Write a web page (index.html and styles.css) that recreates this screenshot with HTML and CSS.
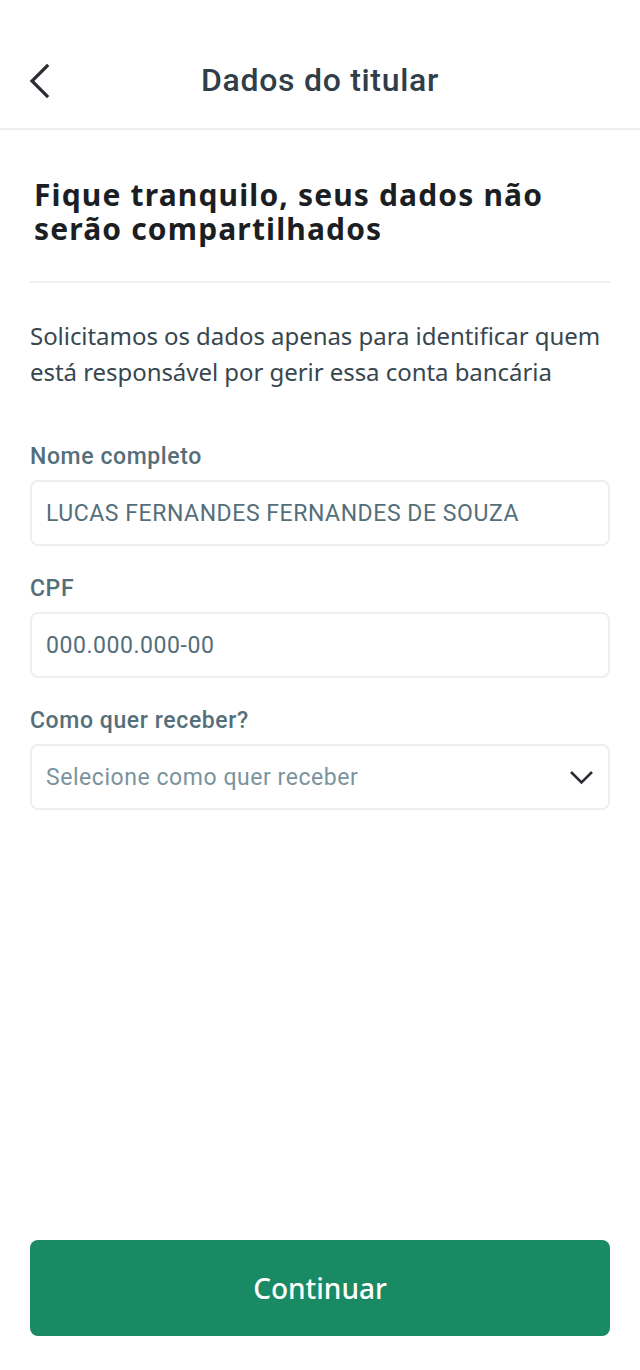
FILE: index.html
```html
<!DOCTYPE html>
<html lang="pt-BR">
<head>
<meta charset="utf-8">
<title>Dados do titular</title>
<link rel="stylesheet" href="styles.css">
</head>
<body>
<div class="screen">
  <header class="topbar">
    <button class="back" aria-label="Voltar">
      <svg width="24" height="34" viewBox="0 0 24 34"><path d="M20 2 L5 17 L20 32" fill="none" stroke="#2b2f33" stroke-width="3.2" stroke-linecap="square"/></svg>
    </button>
    <h1 class="title">Dados do titular</h1>
  </header>
  <main class="content">
    <h2 class="heading">Fique tranquilo, seus dados não serão compartilhados</h2>
    <hr class="divider">
    <p class="lead">Solicitamos os dados apenas para identificar quem está responsável por gerir essa conta bancária</p>
    <div class="field">
      <label class="label">Nome completo</label>
      <div class="input">LUCAS FERNANDES FERNANDES DE SOUZA</div>
    </div>
    <div class="field">
      <label class="label">CPF</label>
      <div class="input">000.000.000-00</div>
    </div>
    <div class="field">
      <label class="label">Como quer receber?</label>
      <div class="input select">
        <span class="placeholder">Selecione como quer receber</span>
        <svg width="27" height="16" viewBox="0 0 27 16"><path d="M3 3 L13.5 13.5 L24 3" fill="none" stroke="#2b2f33" stroke-width="2.6"/></svg>
      </div>
    </div>
  </main>
  <footer class="footer">
    <button class="primary">Continuar</button>
  </footer>
</div>
</body>
</html>
```
FILE: styles.css
```css
* { box-sizing: border-box; }
html, body { margin: 0; padding: 0; background: #fff; }
.screen {
  width: 640px;
  height: 1370px;
  display: flex;
  flex-direction: column;
}
.topbar {
  height: 130px;
  border-bottom: 2px solid #eceff1;
  display: flex;
  align-items: flex-start;
  justify-content: center;
  position: relative;
  padding-top: 60px;
}
.back {
  position: absolute;
  left: 27px;
  top: 64px;
  border: 0;
  background: none;
  padding: 0;
  width: 24px;
  height: 34px;
}
.back svg { display: block; }
.title {
  margin: 0;
  font-family: Roboto, sans-serif;
  font-weight: 500;
  font-size: 32px;
  line-height: 40px;
  letter-spacing: 0.7px;
  color: #2f3e48;
}
.content {
  flex: 1;
  padding: 48px 30px 0;
}
.heading {
  margin: 0 0 0 4px;
  font-family: "Noto Sans", sans-serif;
  font-weight: 700;
  font-size: 30px;
  line-height: 34px;
  letter-spacing: 1.15px;
  color: #1b1f23;
}
.divider {
  margin: 35px 0 0;
  border: 0;
  border-top: 2px solid #eef0f2;
}
.lead {
  margin: 35px 0 0;
  font-family: "Noto Sans", sans-serif;
  font-size: 24px;
  line-height: 36px;
  letter-spacing: -0.05px;
  color: #37474f;
}
.field { margin-top: 53px; }
.field + .field { margin-top: 29px; }
.label {
  display: block;
  font-family: Roboto, sans-serif;
  font-weight: 500;
  font-size: 23px;
  line-height: 28px;
  letter-spacing: 0.6px;
  color: #546e7a;
}
.input {
  margin-top: 9px;
  height: 66px;
  border: 2px solid #eceff1;
  border-radius: 8px;
  padding: 0 14px;
  display: flex;
  align-items: center;
  font-family: Roboto, sans-serif;
  font-size: 23px;
  letter-spacing: 0.55px;
  color: #546e7a;
}
.select { justify-content: space-between; padding-right: 13px; }
.placeholder { color: #7b939e; }
.footer { padding: 0 30px 34px; }
.primary {
  display: block;
  width: 100%;
  height: 96px;
  border: 0;
  border-radius: 8px;
  background: #198a63;
  color: #fff;
  font-family: "Noto Sans", sans-serif;
  font-weight: 500;
  font-size: 28px;
}
```
